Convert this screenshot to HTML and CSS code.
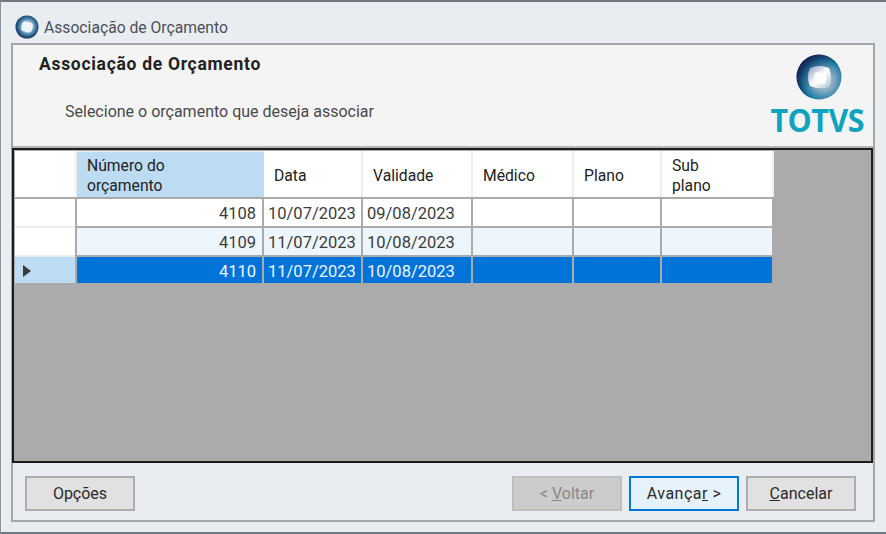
FILE: index.html
```html
<!DOCTYPE html>
<html lang="en">
  <head>
    <meta charset="UTF-8" />
    <meta name="viewport" content="width=device-width, initial-scale=1.0" />
    <title>Associação de Orçamento</title>
    <link rel="stylesheet" href="styles.css">
  </head>
  <body>
    <div class="window">
      <div class="title-bar">
        <svg class="title-icon" viewBox="0 0 24 24" width="24" height="24">
          <defs>
            <radialGradient id="orbSmall" cx="52%" cy="48%" r="55%">
              <stop offset="0" stop-color="#ffffff" />
              <stop offset="0.35" stop-color="#bcd0e0" />
              <stop offset="0.65" stop-color="#3f7ea8" />
              <stop offset="1" stop-color="#14204f" />
            </radialGradient>
          </defs>
          <circle cx="12" cy="12" r="11.5" fill="url(#orbSmall)" />
          <rect x="6.5" y="7" width="11" height="10" rx="3" fill="#f4f7fa" opacity="0.9" transform="rotate(12 12 12)" />
        </svg>
        <span>Associação de Orçamento</span>
      </div>

      <div class="panel">
        <div class="header">
          <div class="header-text">
            <h1>Associação de Orçamento</h1>
            <p>Selecione o orçamento que deseja associar</p>
          </div>
          <div class="logo">
            <svg viewBox="0 0 46 46" width="46" height="46">
              <defs>
                <radialGradient id="orb" cx="60%" cy="58%" r="62%">
                  <stop offset="0" stop-color="#c8d4e0" />
                  <stop offset="0.4" stop-color="#7fa6c0" />
                  <stop offset="0.72" stop-color="#1c7ea6" />
                  <stop offset="1" stop-color="#16204e" />
                </radialGradient>
                <linearGradient id="orbShade" x1="0" y1="0" x2="1" y2="1">
                  <stop offset="0" stop-color="#16204e" stop-opacity="0.85" />
                  <stop offset="0.55" stop-color="#16204e" stop-opacity="0" />
                </linearGradient>
                <linearGradient id="orbTile" x1="0" y1="0" x2="1" y2="1">
                  <stop offset="0" stop-color="#7f97b8" />
                  <stop offset="0.5" stop-color="#ffffff" />
                  <stop offset="1" stop-color="#a9c4d2" />
                </linearGradient>
              </defs>
              <circle cx="23" cy="23" r="22.5" fill="url(#orb)" />
              <circle cx="23" cy="23" r="22.5" fill="url(#orbShade)" />
              <path d="M14 14 Q23 10 33 14 Q37 24 33 33 Q23 36 14 32 Q10 23 14 14 Z" fill="url(#orbTile)" />
              <path d="M19 19 Q25 17 30 20 Q31 25 29 30 Q24 31 19 28 Q18 23 19 19 Z" fill="#ffffff" />
            </svg>
            <span class="logo-name">TOTVS</span>
          </div>
        </div>

        <div class="grid">
          <div class="row head-row">
            <div class="cell head-cell"></div>
            <div class="cell head-cell head-active">Número do<br />orçamento</div>
            <div class="cell head-cell">Data</div>
            <div class="cell head-cell">Validade</div>
            <div class="cell head-cell">Médico</div>
            <div class="cell head-cell">Plano</div>
            <div class="cell head-cell">Sub<br />plano</div>
          </div>
          <div class="row">
            <div class="cell row-head"></div>
            <div class="cell num">4108</div>
            <div class="cell date">10/07/2023</div>
            <div class="cell date">09/08/2023</div>
            <div class="cell"></div>
            <div class="cell"></div>
            <div class="cell"></div>
          </div>
          <div class="row row-alt">
            <div class="cell row-head"></div>
            <div class="cell num">4109</div>
            <div class="cell date">11/07/2023</div>
            <div class="cell date">10/08/2023</div>
            <div class="cell"></div>
            <div class="cell"></div>
            <div class="cell"></div>
          </div>
          <div class="row row-selected">
            <div class="cell row-head"><span class="arrow"></span></div>
            <div class="cell num">4110</div>
            <div class="cell date">11/07/2023</div>
            <div class="cell date">10/08/2023</div>
            <div class="cell"></div>
            <div class="cell"></div>
            <div class="cell"></div>
          </div>
        </div>

        <div class="footer">
          <button class="btn">Opções</button>
          <div class="footer-right">
            <button class="btn btn-disabled">&lt; <u>V</u>oltar</button>
            <button class="btn btn-primary">Avança<u>r</u> &gt;</button>
            <button class="btn"><u>C</u>ancelar</button>
          </div>
        </div>
      </div>
    </div>
  </body>
</html>
```

FILE: styles.css
```css
/* Reset */
* {
  box-sizing: border-box;
  margin: 0;
  padding: 0;
}

body {
  width: 886px;
  height: 534px;
  overflow: hidden;
  font-family: Roboto, "Noto Sans", sans-serif;
  font-size: 16.5px;
  color: #2b2b2b;
}

/* Window frame */
.window {
  height: 534px;
  background: #e9edf2;
  border-top: 2px solid #6d7882;
  border-bottom: 2px solid #6d7882;
  border-left: 1px solid #8a949c;
  padding: 0 10px 10px 10px;
  display: flex;
  flex-direction: column;
}

.title-bar {
  height: 41px;
  display: flex;
  align-items: center;
  gap: 5px;
  padding: 9px 0 0 4px;
  color: #4a5058;
  font-size: 15.7px;
}

.title-icon {
  flex: none;
}

.panel {
  flex: 1;
  border: 2px solid #a3a6a8;
  display: flex;
  flex-direction: column;
  margin-right: 1px;
}

/* Header */
.header {
  height: 103px;
  background: #f4f4f4;
  border-bottom: 2px solid #b4b6b8;
  display: flex;
  justify-content: space-between;
}

.header h1 {
  font-size: 17.5px;
  font-weight: 700;
  line-height: 20px;
  color: #222;
  padding: 9px 0 0 26px;
  letter-spacing: 0.7px;
}

.header p {
  padding: 28px 0 0 52px;
  font-size: 16px;
  line-height: 20px;
  color: #4a4a4a;
}

.logo {
  width: 100px;
  display: flex;
  flex-direction: column;
  align-items: center;
  padding-top: 9px;
  margin-right: 4px;
}

.logo-name {
  font-family: "Open Sans", sans-serif;
  font-size: 32px;
  line-height: 31px;
  font-weight: 700;
  color: #0fa3bf;
  margin: 4px 4px 0 0;
  letter-spacing: -0.5px;
  transform: scaleX(0.95);
}

/* Data grid */
.grid {
  flex: 1;
  background: #ababab;
  border: 2px solid #1c1c1c;
  margin-left: -1px;
  padding: 1px 0 0 1px;
  display: flex;
  flex-direction: column;
  gap: 2px;
}

.row {
  display: grid;
  grid-template-columns: 60px 185px 97px 108px 99px 86px 110px;
  gap: 2px;
  height: 27px;
  width: 757px;
}

.row-selected {
  height: 26px;
}

.head-row {
  height: 46px;
  background: #eeeeee;
  width: 759px;
}

.cell {
  background: #fff;
  display: flex;
  align-items: center;
  white-space: nowrap;
  padding-top: 2px;
  color: #3c3c3c;
}

.head-cell {
  padding: 3px 0 0 10px;
  font-size: 15.7px;
  line-height: 20px;
  color: #222;
}

.head-active {
  background: #bcdcf4;
  margin: 1px -2px 0 0;
  padding-top: 2px;
}

.num {
  justify-content: flex-end;
  padding-right: 6px;
}

.date {
  padding-left: 4px;
}

.row-head {
  box-shadow: 0 2px 0 #eeeeee;
}

.row-alt .cell {
  background: #eef6fd;
}

.row-alt .row-head {
  background: #fff;
}

.row-selected .cell {
  background: #0274d9;
  color: #eef6fd;
}

.row-selected .row-head {
  background: #bcdcf4;
  box-shadow: none;
}

.arrow {
  margin-left: 8px;
  border-left: 8px solid #3a3a3a;
  border-top: 6px solid transparent;
  border-bottom: 6px solid transparent;
}

/* Footer */
.footer {
  height: 57px;
  display: flex;
  justify-content: space-between;
  align-items: flex-start;
  padding: 13px 17px 0 12px;
}

.footer-right {
  display: flex;
  gap: 7px;
}

.btn {
  width: 110px;
  height: 35px;
  background: #e1e1e1;
  border: 2px solid #adadad;
  font-family: inherit;
  font-size: 16px;
  color: #2b2b2b;
}

.btn-disabled {
  background: #cccccc;
  border-color: #bfbfbf;
  color: #888;
}

.btn-primary {
  background: #e5f1fb;
  border-color: #0078d7;
  letter-spacing: 0.5px;
}
```
